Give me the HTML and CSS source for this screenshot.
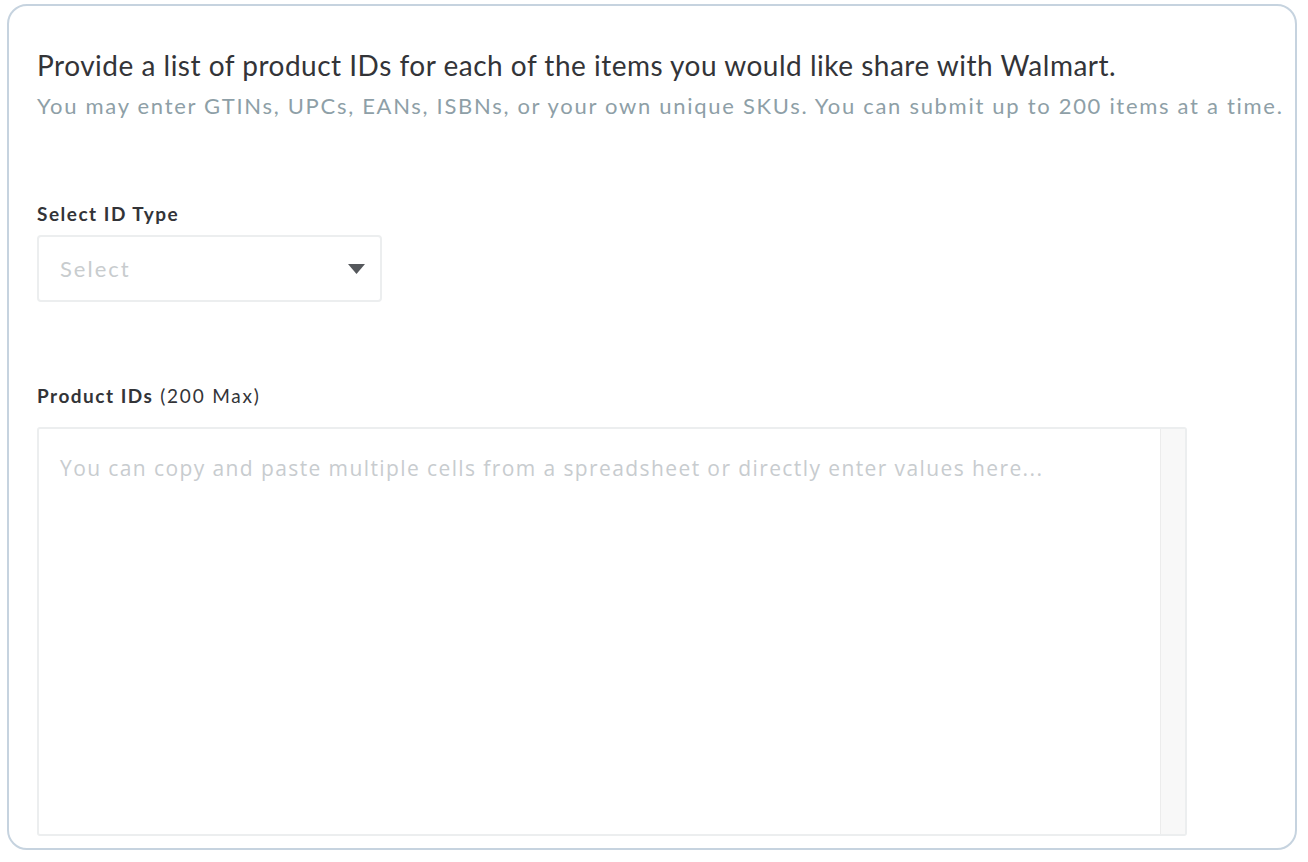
FILE: index.html
```html
<!DOCTYPE html>
<html>
<head>
<meta charset="utf-8">
<link rel="stylesheet" href="styles.css">
</head>
<body>
<div class="card">
  <h1 class="title">Provide a list of product IDs for each of the items you would like share with Walmart.</h1>
  <p class="subtitle">You may enter GTINs, UPCs, EANs, ISBNs, or your own unique SKUs. You can submit up to 200 items at a time.</p>

  <div class="field field-select">
    <label class="label">Select ID Type</label>
    <div class="select">
      <span class="select-placeholder">Select</span>
      <svg class="caret" width="17" height="10" viewBox="0 0 17 10"><path d="M0 0 H17 L8.5 10 Z" fill="#55585c"/></svg>
    </div>
  </div>

  <div class="field field-ids">
    <label class="label"><b>Product IDs</b> (200 Max)</label>
    <div class="textarea">
      <div class="textarea-body">You can copy and paste multiple cells from a spreadsheet or directly enter values here...</div>
      <div class="scroll-track"></div>
    </div>
  </div>
</div>
</body>
</html>
```

FILE: styles.css
```css
html, body {
  margin: 0;
  padding: 0;
  background: #ffffff;
}
body {
  padding: 4px 12px 12px 7px;
  font-family: Lato, "Noto Sans", sans-serif;
}
.card {
  box-sizing: border-box;
  width: 1290px;
  height: 846px;
  border: 2px solid #c6d3df;
  border-radius: 20px;
  padding: 42px 28px 12px 28px;
  display: flex;
  flex-direction: column;
}
.title {
  margin: 0;
  font-size: 28px;
  font-weight: 400;
  color: #333438;
  line-height: 34px;
  letter-spacing: 0.5px;
  white-space: nowrap;
}
.subtitle {
  margin: 10px 0 0 0;
  font-size: 22px;
  color: #8e9fa7;
  line-height: 28px;
  letter-spacing: 1.7px;
  white-space: nowrap;
}
.field {
  display: flex;
  flex-direction: column;
}
.field-select {
  margin-top: 83px;
}
.field-ids {
  margin-top: 83px;
  flex: 1;
}
.label {
  font-size: 19px;
  font-weight: 700;
  color: #333438;
  line-height: 22px;
  letter-spacing: 1.5px;
}
.field-ids .label {
  font-weight: 400;
  letter-spacing: 1.8px;
}
.field-ids .label b {
  font-weight: 700;
  letter-spacing: 1.5px;
}
.select {
  box-sizing: border-box;
  margin-top: 10px;
  width: 345px;
  height: 67px;
  border: 2px solid #eceeef;
  border-radius: 4px;
  display: flex;
  align-items: center;
  justify-content: space-between;
  padding: 0 15px 0 21px;
}
.select-placeholder {
  font-size: 22px;
  letter-spacing: 2px;
  color: #c8ccce;
}
.caret {
  display: block;
}
.textarea {
  box-sizing: border-box;
  margin-top: 20px;
  width: 1150px;
  flex: 1;
  border: 2px solid #eceeef;
  border-radius: 3px;
  display: flex;
}
.textarea-body {
  flex: 1;
  padding: 25px 20px 20px 21px;
  font-family: "Open Sans", "Noto Sans", sans-serif;
  font-size: 21px;
  letter-spacing: 1.4px;
  color: #c8cccf;
  line-height: 28px;
  white-space: nowrap;
}
.scroll-track {
  width: 24px;
  background: #f8f8f8;
  border-left: 1px solid #ececec;
}
```
